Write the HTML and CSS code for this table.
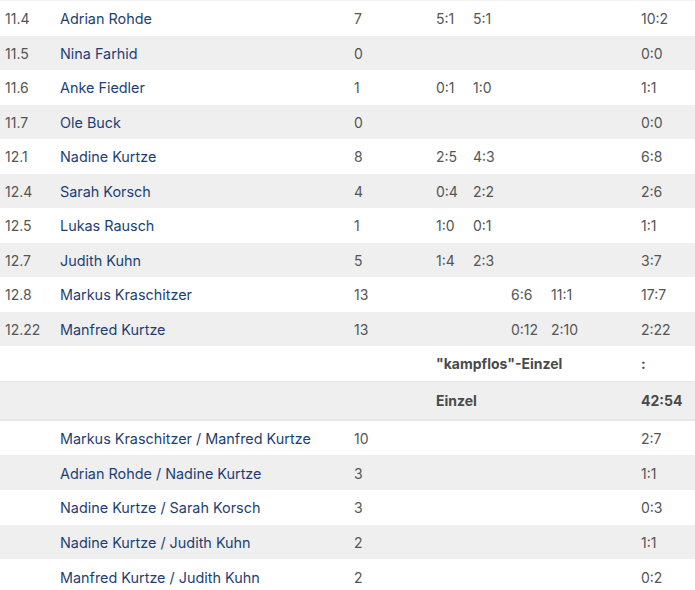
FILE: index.html
```html
<!DOCTYPE html>
<html lang="de">
<head>
<meta charset="utf-8">
<link rel="stylesheet" href="styles.css">
</head>
<body>
<div class="table">
  <div class="edge"></div>
  <div class="row"><span class="num">11.4</span><a class="name">Adrian Rohde</a><span>7</span><span>5:1</span><span>5:1</span><span></span><span></span><span>10:2</span></div>
  <div class="row alt"><span class="num">11.5</span><a class="name">Nina Farhid</a><span>0</span><span></span><span></span><span></span><span></span><span>0:0</span></div>
  <div class="row"><span class="num">11.6</span><a class="name">Anke Fiedler</a><span>1</span><span>0:1</span><span>1:0</span><span></span><span></span><span>1:1</span></div>
  <div class="row alt"><span class="num">11.7</span><a class="name">Ole Buck</a><span>0</span><span></span><span></span><span></span><span></span><span>0:0</span></div>
  <div class="row"><span class="num">12.1</span><a class="name">Nadine Kurtze</a><span>8</span><span>2:5</span><span>4:3</span><span></span><span></span><span>6:8</span></div>
  <div class="row alt"><span class="num">12.4</span><a class="name">Sarah Korsch</a><span>4</span><span>0:4</span><span>2:2</span><span></span><span></span><span>2:6</span></div>
  <div class="row"><span class="num">12.5</span><a class="name">Lukas Rausch</a><span>1</span><span>1:0</span><span>0:1</span><span></span><span></span><span>1:1</span></div>
  <div class="row alt"><span class="num">12.7</span><a class="name">Judith Kuhn</a><span>5</span><span>1:4</span><span>2:3</span><span></span><span></span><span>3:7</span></div>
  <div class="row"><span class="num">12.8</span><a class="name">Markus Kraschitzer</a><span>13</span><span></span><span></span><span>6:6</span><span>11:1</span><span>17:7</span></div>
  <div class="row alt"><span class="num">12.22</span><a class="name">Manfred Kurtze</a><span>13</span><span></span><span></span><span>0:12</span><span>2:10</span><span>2:22</span></div>
  <div class="row sum"><span class="label">"kampflos"-Einzel</span><span class="total">:</span></div>
  <div class="row sum alt total-row"><span class="label">Einzel</span><span class="total">42:54</span></div>
  <div class="row dbl"><span></span><a class="name">Markus Kraschitzer / Manfred Kurtze</a><span>10</span><span></span><span></span><span></span><span></span><span>2:7</span></div>
  <div class="row dbl alt"><span></span><a class="name">Adrian Rohde / Nadine Kurtze</a><span>3</span><span></span><span></span><span></span><span></span><span>1:1</span></div>
  <div class="row dbl"><span></span><a class="name">Nadine Kurtze / Sarah Korsch</a><span>3</span><span></span><span></span><span></span><span></span><span>0:3</span></div>
  <div class="row dbl alt"><span></span><a class="name">Nadine Kurtze / Judith Kuhn</a><span>2</span><span></span><span></span><span></span><span></span><span>1:1</span></div>
  <div class="row dbl"><span></span><a class="name">Manfred Kurtze / Judith Kuhn</a><span>2</span><span></span><span></span><span></span><span></span><span>0:2</span></div>
</div>
</body>
</html>
```

FILE: styles.css
```css
html, body {
  margin: 0;
  padding: 0;
  background: #ffffff;
}
body {
  font-family: Inter, "Open Sans", "Liberation Sans", sans-serif;
  font-size: 14px;
  color: #555555;
  width: 695px;
  overflow: hidden;
}
.table {
  display: flex;
  flex-direction: column;
}
.edge {
  height: 1px;
  background: #f2f2f2;
}
.row {
  display: grid;
  grid-template-columns: 55px 294px 82px 37px 38px 40px 90px 1fr;
  align-items: center;
  height: 34.5px;
  padding-left: 5px;
  padding-top: 1px;
  box-sizing: border-box;
  background: #ffffff;
  white-space: nowrap;
}
.row.alt {
  background: #efefef;
}
.row.dbl {
  height: 34.7px;
}
.num {
  color: #555555;
}
.name {
  color: #1e3f74;
  text-decoration: none;
  font-size: 14.4px;
}
.sum {
  font-weight: 700;
  color: #4a4a4a;
}
.sum .label {
  grid-column: 4 / 8;
}
.sum .total {
  grid-column: 8;
}
.total-row {
  height: 40px;
  border-top: 1px solid #e6e6e6;
  border-bottom: 2px solid #e6e6e6;
}
```
